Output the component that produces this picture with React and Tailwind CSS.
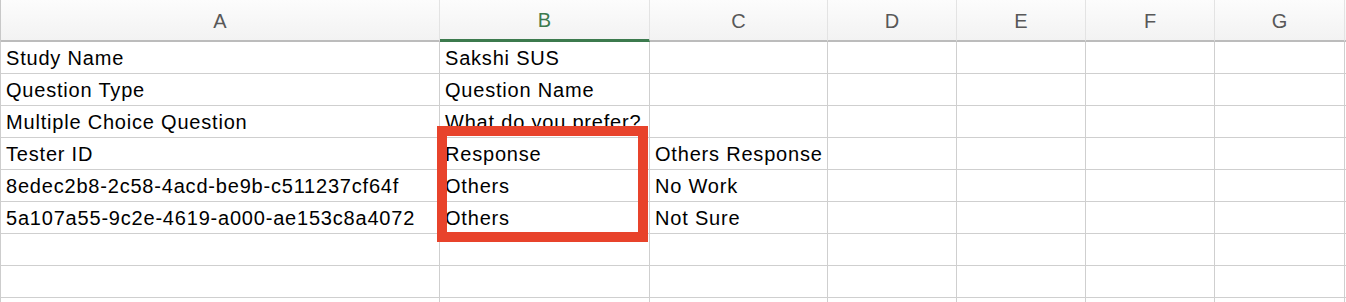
import React from 'react';

const columns = [
  { key: 'A', width: 'w-[439px]' },
  { key: 'B', width: 'w-[210px]', active: true },
  { key: 'C', width: 'w-[178px]' },
  { key: 'D', width: 'w-[129px]' },
  { key: 'E', width: 'w-[129px]' },
  { key: 'F', width: 'w-[129px]' },
  { key: 'G', width: 'w-[130px]' },
];

const rows = [
  ['Study Name', 'Sakshi SUS', ''],
  ['Question Type', 'Question Name', ''],
  ['Multiple Choice Question', 'What do you prefer?', ''],
  ['Tester ID', 'Response', 'Others Response'],
  ['8edec2b8-2c58-4acd-be9b-c511237cf64f', 'Others', 'No Work'],
  ['5a107a55-9c2e-4619-a000-ae153c8a4072', 'Others', 'Not Sure'],
  ['', '', ''],
  ['', '', ''],
  ['', '', ''],
];

function HeaderRow() {
  return (
    <div className="flex h-[42px] bg-gradient-to-b from-[#fcfcfc] to-[#f2f2f2]">
      <div className="w-px shrink-0 bg-[#c8c8c8]" />
      {columns.map((col) => (
        <div
          key={col.key}
          className={`${col.width} shrink-0 flex items-center justify-center border-r border-[#e3e3e3] ${
            col.active
              ? 'border-b-[3px] border-b-[#3c7a4e] text-[#3c7a4e]'
              : 'border-b-2 border-b-[#bcbcbc] text-[#585858]'
          }`}
        >
          <span className="text-[20px] pt-[1px]">{col.key}</span>
        </div>
      ))}
      <div className="flex-1 border-b-2 border-b-[#bcbcbc]" />
    </div>
  );
}

function DataRow({ cells }) {
  return (
    <div className="flex h-[32px]">
      <div className="w-px shrink-0 bg-[#cdcdcd]" />
      {columns.map((col, i) => (
        <div
          key={col.key}
          className={`${col.width} shrink-0 border-r border-b border-[#cfcfcf] pl-[5px] pt-[1px] leading-[30px] text-[20px] tracking-[0.8px] text-black whitespace-nowrap overflow-hidden`}
        >
          {cells[i] || ''}
        </div>
      ))}
      <div className="flex-1 border-b border-[#cfcfcf]" />
    </div>
  );
}

export default function App() {
  return (
    <div
      className="relative w-[1346px] h-[302px] overflow-hidden bg-white"
      style={{ fontFamily: '"Liberation Sans", Arial, sans-serif' }}
    >
      <HeaderRow />
      {rows.map((cells, i) => (
        <DataRow key={i} cells={cells} />
      ))}
      {/* highlight around the Response column */}
      <div className="absolute left-[437px] top-[126px] w-[211px] h-[116px] border-[10px] border-[#e8432b] pointer-events-none" />
    </div>
  );
}
